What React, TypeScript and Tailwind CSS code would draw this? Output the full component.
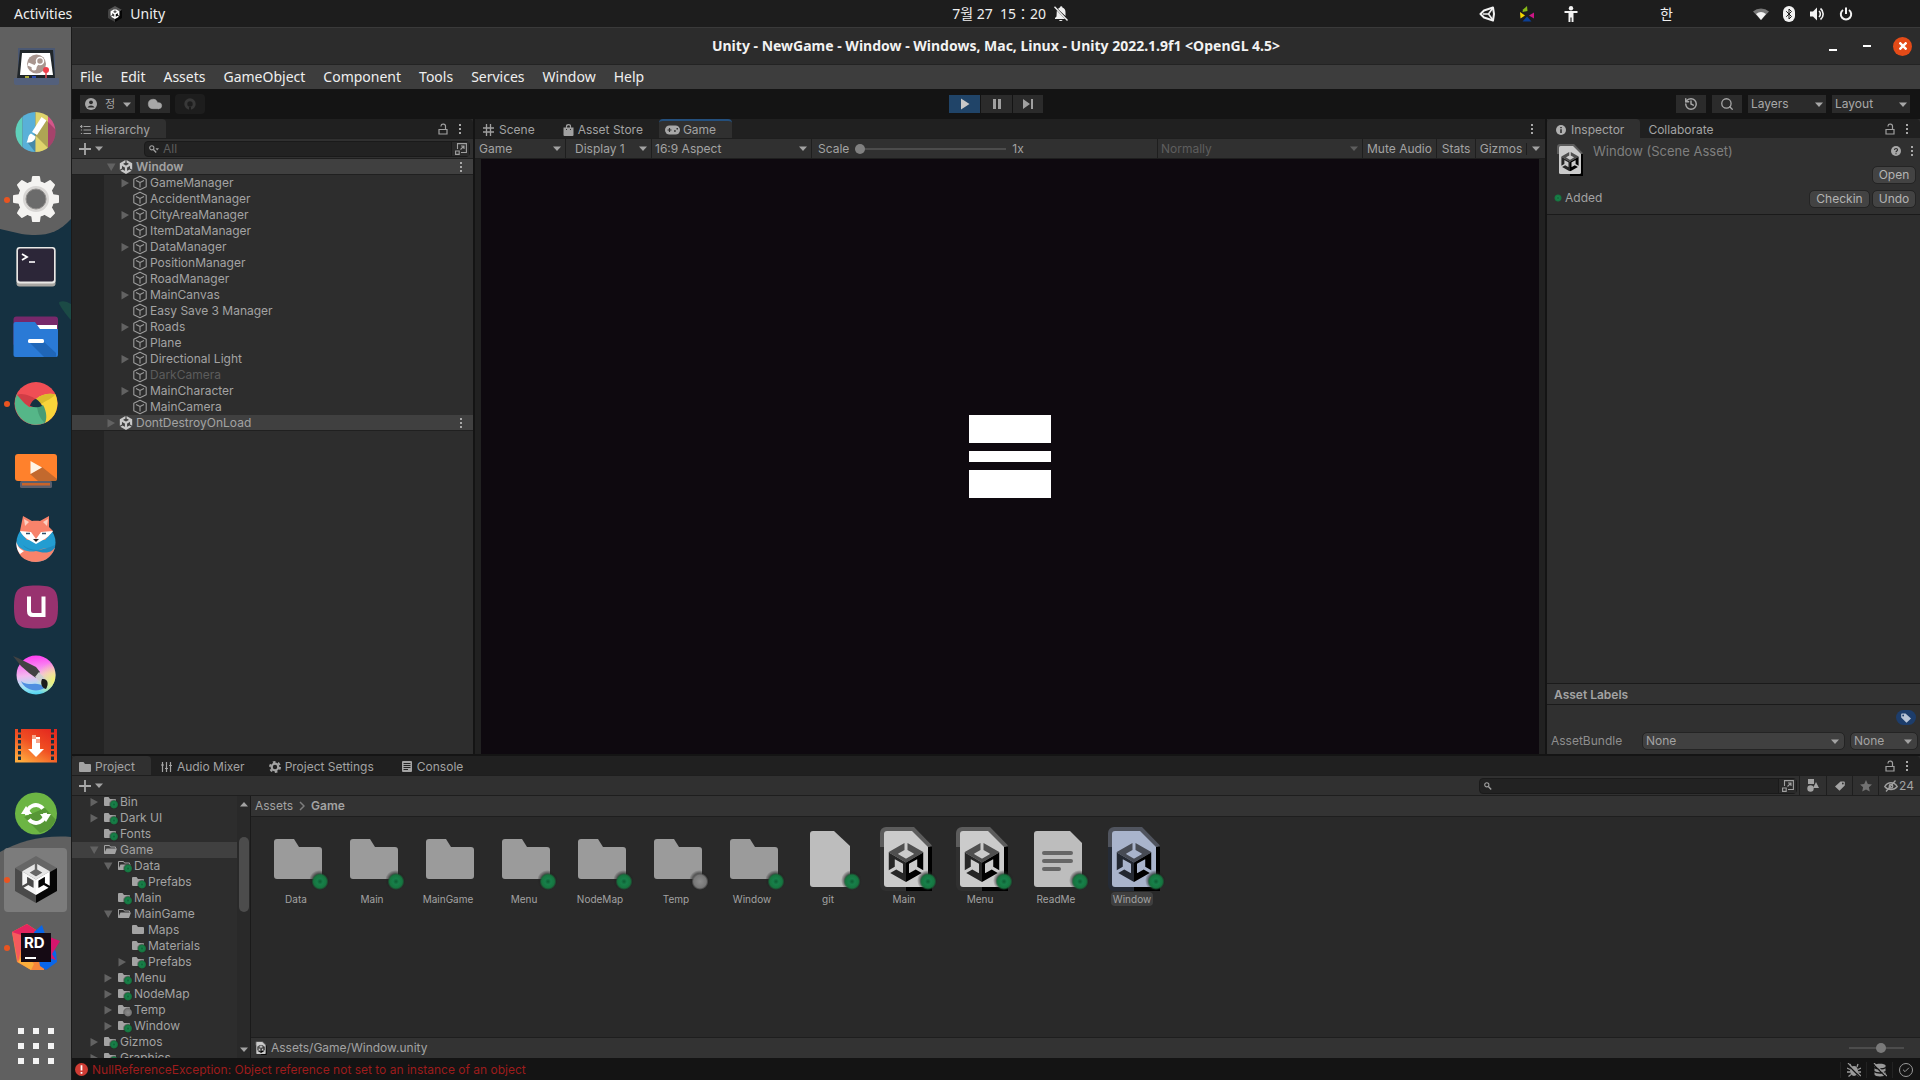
import type { ReactNode } from "react";
import clsx from "clsx";
import {
  Bluetooth,
  Check,
  Cloud,
  History,
  Search,
} from "lucide-react";

/* ---------- data ---------- */

const MENUS = ["File", "Edit", "Assets", "GameObject", "Component", "Tools", "Services", "Window", "Help"];

interface HierarchyItem {
  name: string;
  children?: boolean;
  disabled?: boolean;
}

const HIERARCHY: HierarchyItem[] = [
  { name: "GameManager", children: true },
  { name: "AccidentManager" },
  { name: "CityAreaManager", children: true },
  { name: "ItemDataManager" },
  { name: "DataManager", children: true },
  { name: "PositionManager" },
  { name: "RoadManager" },
  { name: "MainCanvas", children: true },
  { name: "Easy Save 3 Manager" },
  { name: "Roads", children: true },
  { name: "Plane" },
  { name: "Directional Light", children: true },
  { name: "DarkCamera", disabled: true },
  { name: "MainCharacter", children: true },
  { name: "MainCamera" },
];

type Badge = "added" | "ignored";

interface FolderItem {
  name: string;
  depth: 0 | 1 | 2;
  arrow?: "open" | "closed";
  open?: boolean;
  badge?: Badge;
  selected?: boolean;
}

const FOLDERS: FolderItem[] = [
  { name: "Bin", depth: 0, arrow: "closed", badge: "added" },
  { name: "Dark UI", depth: 0, arrow: "closed", badge: "added" },
  { name: "Fonts", depth: 0, badge: "added" },
  { name: "Game", depth: 0, arrow: "open", open: true, selected: true },
  { name: "Data", depth: 1, arrow: "open", open: true, badge: "added" },
  { name: "Prefabs", depth: 2, badge: "added" },
  { name: "Main", depth: 1, badge: "added" },
  { name: "MainGame", depth: 1, arrow: "open", open: true },
  { name: "Maps", depth: 2 },
  { name: "Materials", depth: 2, badge: "added" },
  { name: "Prefabs", depth: 2, arrow: "closed", badge: "added" },
  { name: "Menu", depth: 1, arrow: "closed", badge: "added" },
  { name: "NodeMap", depth: 1, arrow: "closed", badge: "added" },
  { name: "Temp", depth: 1, arrow: "closed", badge: "ignored" },
  { name: "Window", depth: 1, arrow: "closed", badge: "added" },
  { name: "Gizmos", depth: 0, arrow: "closed", badge: "added" },
  { name: "Graphics", depth: 0, arrow: "closed", badge: "added" },
];

const INDENT = { 0: "pl-[17px]", 1: "pl-[31px]", 2: "pl-[45px]" };

interface Asset {
  name: string;
  kind: "folder" | "file" | "scene" | "text";
  badge?: Badge;
  selected?: boolean;
}

const ASSETS: Asset[] = [
  { name: "Data", kind: "folder", badge: "added" },
  { name: "Main", kind: "folder", badge: "added" },
  { name: "MainGame", kind: "folder" },
  { name: "Menu", kind: "folder", badge: "added" },
  { name: "NodeMap", kind: "folder", badge: "added" },
  { name: "Temp", kind: "folder", badge: "ignored" },
  { name: "Window", kind: "folder", badge: "added" },
  { name: "git", kind: "file", badge: "added" },
  { name: "Main", kind: "scene", badge: "added" },
  { name: "Menu", kind: "scene", badge: "added" },
  { name: "ReadMe", kind: "text", badge: "added" },
  { name: "Window", kind: "scene", badge: "added", selected: true },
];

/* ---------- small glyphs ---------- */

const UNITY_PATH =
  "m12.9288 4.2939 3.7997 2.1929c.1366.077.1415.2905 0 .3675l-4.515 2.6076a.4192.4192 0 0 1-.4246 0L7.274 6.8543c-.139-.0745-.1415-.293 0-.3675l3.7972-2.193V0L1.3758 5.5977V16.793l3.7177-2.1456v-4.3858c-.0025-.1565.1813-.2682.318-.1838l4.5148 2.6076a.4252.4252 0 0 1 .2136.3676v5.2127c.0025.1565-.1813.2682-.3179.1838l-3.7996-2.1929-3.7178 2.1457L12 24l9.6954-5.5977-3.7178-2.1457-3.7996 2.1929c-.1341.082-.3229-.0248-.3179-.1838V13.053c0-.1565.087-.2956.2136-.3676l4.5149-2.6076c.134-.082.3228.0224.3179.1838v4.3858l3.7177 2.1456V5.5977L12.9288 0Z";

const SharedDefs = () => (
  <svg className="absolute size-0" aria-hidden="true">
    <defs>
      <clipPath id="unity-mark">
        <path d={UNITY_PATH} />
      </clipPath>
      <radialGradient id="badge-added">
        <stop offset="0" stopColor="#0e5c33" />
        <stop offset="0.35" stopColor="#17804a" />
        <stop offset="0.75" stopColor="#16753f" />
        <stop offset="1" stopColor="#16753f" stopOpacity="0" />
      </radialGradient>
      <radialGradient id="badge-ignored">
        <stop offset="0" stopColor="#8c8c8c" />
        <stop offset="0.75" stopColor="#777" />
        <stop offset="1" stopColor="#777" stopOpacity="0" />
      </radialGradient>
      <radialGradient id="badge-shade">
        <stop offset="0.5" stopColor="#1f1f1f" stopOpacity="0.9" />
        <stop offset="1" stopColor="#1f1f1f" stopOpacity="0" />
      </radialGradient>
    </defs>
  </svg>
);

const UnityMark = ({ className }: { className?: string }) => (
  <svg viewBox="0 0 24 24" className={className} fill="currentColor" aria-hidden="true">
    <path d={UNITY_PATH} />
  </svg>
);

/* The three faces of the cube, each with its own shade. */
const ShadedMark = ({ top, left, right }: { top: string; left: string; right: string }) => (
  <g clipPath="url(#unity-mark)">
    <path d="M0 0H24V5L12 12 0 5Z" fill={top} />
    <path d="M0 5 12 12V24H0Z" fill={left} />
    <path d="M24 5 12 12V24H24Z" fill={right} />
  </g>
);

const CubeGlyph = () => (
  <svg viewBox="0 0 14 16" className="h-4 w-3.5 shrink-0" fill="none" stroke="#9c9c9c" strokeLinejoin="round" aria-hidden="true">
    <path d="M7 1.200 13.200 4.300V11.700L7 14.800.8 11.700V4.300ZM3 5.500 7 7.500 11 5.500M7 7.500V12.500" strokeWidth="1.100" />
  </svg>
);

const Caret = ({ className }: { className?: string }) => (
  <svg viewBox="0 0 8 5" className={clsx("h-[5px] w-2 shrink-0", className)} fill="currentColor" aria-hidden="true">
    <path d="M0 0.5H8L4 5Z" />
  </svg>
);

const Kebab = () => (
  <svg viewBox="0 0 4 12" className="h-3 w-1" fill="#a8a8a8" aria-hidden="true">
    <path d="M1 1h2v2H1ZM1 5h2v2H1ZM1 9h2v2H1Z" />
  </svg>
);

const LockOpen = () => (
  <svg viewBox="0 0 10 12" className="h-3 w-2.5" fill="none" stroke="#a0a0a0" aria-hidden="true">
    <path d="M1 6.500H9V11H1Z" strokeWidth="1.200" />
    <path d="M3 3.500V3a2 2 0 0 1 2-1.800h.6A1.800 1.800 0 0 1 7.500 3V6.500" strokeWidth="1.200" />
  </svg>
);

const Plus = () => (
  <svg viewBox="0 0 12 12" className="size-3" stroke="#a8a8a8" strokeWidth="1.800" aria-hidden="true">
    <path d="M6 0V12M0 6H12" />
  </svg>
);

const PickerIcon = () => (
  <svg viewBox="0 0 12 12" className="size-3" fill="none" stroke="#a0a0a0" aria-hidden="true">
    <path d="M2.500 6V.6H11.400V9.500H6M.6 8H4.200V11.400H.6ZM5.500 6.500 9 3M6 3H9V6" strokeWidth="1.100" />
  </svg>
);

const SearchGlyph = ({ drop }: { drop?: boolean }) => (
  <svg viewBox="0 0 10 8" className="h-2 w-2.5 shrink-0" fill="none" stroke="#a0a0a0" aria-hidden="true">
    <circle cx="2.800" cy="2.800" r="2.100" strokeWidth="1.100" />
    <path d="M4.400 4.400 7.200 7.400" strokeWidth="1.400" />
    {drop && <path d="M6.500 3.200H10L8.200 5.400Z" fill="#a0a0a0" stroke="none" />}
  </svg>
);

const TreeArrow = ({ state }: { state?: "open" | "closed" }) => (
  <svg viewBox="0 0 10 10" className="size-2.5 shrink-0" fill="#626262" aria-hidden="true">
    {state === "open" && <path d="M1 1.500H9.500L5.200 9Z" />}
    {state === "closed" && <path d="M1.500 1 9 5 1.500 9.500Z" />}
  </svg>
);

const FolderGlyph = ({ open, badge }: { open?: boolean; badge?: Badge }) => (
  <svg viewBox="0 0 16 14" className="h-3.5 w-4 shrink-0" aria-hidden="true">
    {open ? (
      <>
        <path d="M1.500 10.500V2.500H6.500L7.500 4H12.500V5.500" fill="none" stroke="#a3a3a3" />
        <path d="M1 11 3.500 5.500H14L12 11Z" fill="#a3a3a3" />
      </>
    ) : (
      <path d="M1 3a1 1 0 0 1 1-1H5.500L7 4H12a1 1 0 0 1 1 1V10a1 1 0 0 1-1 1H2a1 1 0 0 1-1-1Z" fill="#a3a3a3" />
    )}
    {badge && (
      <>
        <circle cx="11" cy="9.500" r="5.500" fill="url(#badge-shade)" />
        <circle cx="11" cy="9.500" r="4.500" fill={badge === "added" ? "url(#badge-added)" : "url(#badge-ignored)"} />
      </>
    )}
  </svg>
);

const SceneDoc = ({ selected }: { selected?: boolean }) => (
  <>
    <path d="M6 20V6a6 6 0 0 1 6-6H40L58 18.500 55 20Z" fill={selected ? "#50545e" : "#5c5c5c"} />
    <path d="M6 20V58a6 6 0 0 0 6 6H32V20Z" fill={selected ? "#252b36" : "#303030"} />
    <path d="M32 20H58V64H32Z" fill="#000" />
    <path
      d="M10 7a3 3 0 0 1 3-3H38L54 20V57a3 3 0 0 1-3 3H13a3 3 0 0 1-3-3Z"
      fill={selected ? "#a9b4cc" : "#cbcbcb"}
    />
    <svg x="12" y="16" width="40" height="39" viewBox="0 0 24 24">
      <ShadedMark top={selected ? "#474b54" : "#4f4f4f"} left={selected ? "#232831" : "#262626"} right="#000" />
    </svg>
  </>
);

const AssetThumb = ({ kind, badge, selected }: Asset) => (
  <svg viewBox="0 0 64 64" className="size-16" aria-hidden="true">
    {kind === "folder" && (
      <path
        d="M8 15a3 3 0 0 1 3-3H28L33 20H53a3 3 0 0 1 3 3V49a3 3 0 0 1-3 3H11a3 3 0 0 1-3-3Z"
        fill="#9b9b9b"
      />
    )}
    {kind === "file" && <path d="M12 7a3 3 0 0 1 3-3H36L52 19V57a3 3 0 0 1-3 3H15a3 3 0 0 1-3-3Z" fill="#bdbdbd" />}
    {kind === "text" && (
      <>
        <path d="M8 7a3 3 0 0 1 3-3H44L56 16V57a3 3 0 0 1-3 3H11a3 3 0 0 1-3-3Z" fill="#bdbdbd" />
        <path d="M18 26H45M18 34H45M18 42H33" stroke="#666" strokeWidth="4" strokeLinecap="round" />
      </>
    )}
    {kind === "scene" && <SceneDoc selected={selected} />}
    {badge && (
      <>
        <circle cx="53.500" cy="53.500" r="10.500" fill="url(#badge-shade)" />
        <circle cx="54" cy="54.500" r="8.500" fill={badge === "added" ? "url(#badge-added)" : "url(#badge-ignored)"} />
      </>
    )}
  </svg>
);

/* ---------- desktop top bar ---------- */

const TopBar = () => (
  <header className="flex h-[27px] shrink-0 items-center bg-[#1d1d1d] font-['Noto_Sans','Noto_Sans_CJK_KR',sans-serif] text-sm text-[#efefef]">
    <div className="flex flex-[951] items-center">
      <button className="ml-3.5">Activities</button>
      <button className="ml-9 flex items-center gap-2">
        <svg viewBox="0 0 14 16" className="h-4 w-3.5" aria-hidden="true">
          <path d="M7 0 14 4 7 8 0 4Z" fill="#555" />
          <path d="M0 4 7 8V16L0 12Z" fill="#444" />
          <path d="M14 4 7 8V16L14 12Z" fill="#050505" />
          <svg x="2" y="3" width="10" height="10" viewBox="0 0 24 24">
            <path d={UNITY_PATH} fill="#fff" />
          </svg>
        </svg>
        Unity
      </button>
    </div>
    <button className="flex items-center gap-2 whitespace-pre">
      <span>7월 27  15：20</span>
      <svg viewBox="0 0 14 16" className="h-4 w-3.5" fill="#efefef" aria-hidden="true">
        <path d="M6 1.500a1.200 1.200 0 0 1 2.400 0C10.500 2.200 11.500 4 11.500 6V10L4 3C4.600 2.200 5.200 1.700 6 1.500ZM2.800 4.500 11 13H1V12L2.500 10.500ZM5 14H8.500C8.300 15.300 5.300 15.300 5 14Z" />
        <path d="M.5.8 13.500 14.500" stroke="#efefef" strokeWidth="1.400" />
      </svg>
    </button>
    <div className="flex flex-[851] items-center justify-end">
      <svg viewBox="0 0 16 16" className="size-4" fill="none" stroke="#f2f2f2" strokeWidth="2" aria-hidden="true">
        <path d="M1.500 8 5 4.500 14 1.500 15 8 14 14.500 5 11.500Z" strokeLinejoin="round" />
        <path d="M4 8H9.500L13.500 2.500M9.500 8 13.500 13.500" strokeWidth="1.600" />
      </svg>
      <svg viewBox="0 0 16 16" className="ml-6 size-4" aria-hidden="true">
        <path d="M4 3.500 8 0 8.500 5 3.500 6Z" fill="#86b817" />
        <path d="M1 6 6 9.500 1.500 12.500Z" fill="#f5d800" />
        <path d="M15 6.500 10 9.500 15 12.500Z" fill="#cc1685" />
        <path d="M8 10.500 12.500 15.500H3.500Z" fill="#0c3f94" />
      </svg>
      <svg viewBox="0 0 14 16" className="ml-[29px] h-4 w-3.5" fill="#f2f2f2" aria-hidden="true">
        <circle cx="7" cy="2.200" r="2.200" />
        <path d="M.5 5H13.500V7H9.500V16H7.600V11.500H6.400V16H4.500V7H.5Z" />
      </svg>
      <span className="ml-[82px]">한</span>
      <svg viewBox="0 0 16 12" className="ml-20 h-3 w-4" aria-hidden="true">
        <path d="M0 3.500A12 12 0 0 1 16 3.500L8 12Z" fill="#777" />
        <path d="M3 6A8 8 0 0 1 13 6L8 12Z" fill="#f2f2f2" />
      </svg>
      <span className="ml-[14px] flex h-4 w-3 items-center justify-center rounded-full bg-[#f2f2f2]">
        <Bluetooth className="size-3 text-[#1d1d1d]" />
      </span>
      <svg viewBox="0 0 16 16" className="ml-[14px] size-4" fill="#f2f2f2" aria-hidden="true">
        <path d="M1 5.500H4L8 1.500V14.500L4 10.500H1Z" />
        <path d="M10 5a4 4 0 0 1 0 6M11.500 2.500a7 7 0 0 1 0 11" fill="none" stroke="#f2f2f2" strokeWidth="1.600" />
      </svg>
      <svg viewBox="0 0 14 14" className="mr-[67px] ml-[14px] size-3.5" fill="none" stroke="#f2f2f2" strokeWidth="2" aria-hidden="true">
        <path d="M4 3A5.200 5.200 0 1 0 10 3M7 0.500V7" />
      </svg>
    </div>
  </header>
);

/* ---------- dock ---------- */

const DOCK_ICONS: { id: string; label: string; running?: boolean; active?: boolean; art: ReactNode }[] = [
  {
    id: "steam",
    label: "Steam",
    art: (
      <>
        <path d="M6 8H43V38H6Z" fill="#4b5872" />
        <path d="M8 10H41L43 38H5Z" fill="#20262a" />
        <path d="M10 13H38L41 35H8Z" fill="#fff" />
        <circle cx="24.500" cy="24" r="9.500" fill="#a9968f" />
        <path d="M16 24 23 27 27 21" stroke="#fff" strokeWidth="3" fill="none" />
        <circle cx="28" cy="21" r="3.500" fill="#a9968f" stroke="#fff" strokeWidth="1.500" />
        <circle cx="22" cy="28" r="2.500" fill="#fff" />
        <path d="M2 38H47V43a2 2 0 0 1-2 2H4a2 2 0 0 1-2-2Z" fill="#53607c" />
        <path d="M13 36H17V38H13Z" fill="#a9a837" />
        <path d="M20 36H24V38H20Z" fill="#2c4bb0" />
        <path d="M34 30V38" stroke="#e24b55" strokeWidth="1.500" />
        <circle cx="34" cy="30" r="3" fill="#ef3e4a" />
      </>
    ),
  },
  {
    id: "paint",
    label: "Paint",
    art: (
      <>
        <clipPath id="paint-disc">
          <circle cx="23.500" cy="24" r="20" />
        </clipPath>
        <g clipPath="url(#paint-disc)">
          <path d="M0 0H10.500V48H0Z" fill="#5fd0ba" />
          <path d="M10.500 0H23.500V48H10.500Z" fill="#59b0d8" />
          <path d="M23.500 0H36V48H23.500Z" fill="#dfd46c" />
          <path d="M36 0H48V48H36Z" fill="#d4568a" />
          <path d="M34 12 48 26V38L40 44 22 26Z" fill="#000" opacity="0.22" />
          <path d="M16 35 23 28V44Z" fill="#000" opacity="0.22" />
        </g>
        <path d="M29.500 9 34.500 12.500 25 27 20 24Z" fill="#fff" />
        <path d="M19 25.500 23.500 28.500C23 34 18 35 14.500 34.500 16.500 32 15.500 27 19 25.500Z" fill="#fff" />
      </>
    ),
  },
  {
    id: "settings",
    label: "Settings",
    running: true,
    art: (
      <>
        <g fill="#f4f3f1" stroke="#f4f3f1" strokeWidth="2" strokeLinejoin="round">
          <circle cx="24" cy="23" r="17" />
          <path d="M21 1H27L28 8H20ZM21 45H27L28 38H20ZM2 20V26L9 27V19ZM46 20V26L39 27V19Z" />
          <path d="M6 9 10 5 17 9 10 16ZM42 9 38 5 31 9 38 16ZM6 37 10 41 17 37 10 30ZM42 37 38 41 31 37 38 30Z" />
        </g>
        <circle cx="24" cy="23" r="13" fill="#d8d6d4" />
        <circle cx="24" cy="23" r="10" fill="#6b6b6b" stroke="#908e8c" />
      </>
    ),
  },
  {
    id: "terminal",
    label: "Terminal",
    art: (
      <>
        <rect x="4.500" y="4" width="39" height="38.500" rx="3" fill="#a8a6a2" />
        <rect x="4.500" y="3" width="39" height="36.500" rx="3" fill="#e9e8e6" />
        <rect x="6" y="4.500" width="36" height="33" rx="2" fill="#2c2638" />
        <path d="M10 10 15 13 10 16" fill="none" stroke="#fff" strokeWidth="1.800" />
        <path d="M17 18H23" stroke="#fff" strokeWidth="1.600" />
      </>
    ),
  },
  {
    id: "files",
    label: "Files",
    art: (
      <>
        <rect x="1.500" y="4.500" width="44.500" height="30" rx="3" fill="#77286a" />
        <path d="M22 13H45V20H22Z" fill="#fff" />
        <path d="M1.500 12a2 2 0 0 1 2-2H23L28 17H46V43a2 2 0 0 1-2 2H3.500a2 2 0 0 1-2-2Z" fill="#2a7ad6" />
        <path d="M18 31 31 29 44 41V45H32Z" fill="#1f66b8" />
        <rect x="16" y="27" width="16" height="4" rx="1.500" fill="#fff" />
      </>
    ),
  },
  {
    id: "chrome",
    label: "Chrome",
    running: true,
    art: (
      <>
        <circle cx="24" cy="23.500" r="21.500" fill="#f04e55" />
        <path d="M5 14A21.500 21.500 0 0 0 33 43L29 27 17 27Z" fill="#55b688" />
        <path d="M43.500 14.500A21.500 21.500 0 0 1 33 43C35 34 32 25 24 19 30 14 38 13 43.500 14.500Z" fill="#f9d43a" />
        <path d="M5 15C10 12 19 16 24 19L18 27C13 25 9 19 5 15Z" fill="#d13d46" />
        <path d="M43.500 14.500C38 20 31 22 29.500 24L24 19C30 14 38 13 43.500 14.500Z" fill="#dcbc2b" />
        <path d="M33 43C27 38 26 32 25 27L31 25C35 32 35 39 33 43Z" fill="#479c74" />
        <path d="M18 26C19 22 22 19 24 19 27 21 29 23 30 26 26 28 22 27.500 18 26Z" fill="#153141" />
      </>
    ),
  },
  {
    id: "video",
    label: "Video player",
    art: (
      <>
        <rect x="8" y="33" width="32" height="7" rx="1.500" fill="#5a5e6c" />
        <rect x="10" y="35" width="28" height="2.500" fill="#c8632a" />
        <rect x="3" y="6" width="42" height="27" rx="3" fill="#ff812c" />
        <path d="M18 26 30 19 45 31a2 2 0 0 1-2 2H26Z" fill="#c2692e" />
        <path d="M18.500 13V26L30 19.500Z" fill="#fff5e6" />
      </>
    ),
  },
  {
    id: "fox",
    label: "Postal fox",
    art: (
      <>
        <circle cx="24" cy="26.500" r="19.500" fill="#239dd1" />
        <path d="M11 0 20 5C22 4.500 26 4.500 28 5L37 0 37 11 41 15 33 24H15L8 15Z" fill="#f8836b" />
        <path d="M12 3 17 6 13 10ZM36 3 31 6 35 10Z" fill="#fbd0c2" />
        <path d="M8 15 19 16 24 23 29 16 41 15C38 19 35 22 31 24L24 28 17 24C13 22 10 19 8 15Z" fill="#fff" />
        <path d="M14 17.500H18M30 17.500H34" stroke="#30506a" strokeWidth="1.300" />
        <path d="M21 23H27L24 26Z" fill="#222" />
        <path d="M4.500 27C8 36 22 37 27 34 34 31 39 34 43 32 39 43 30 46 24 46 12 46 4 38 4.500 27Z" fill="#f8836b" />
        <path d="M4.500 25C5 31 9 34 12 35L8 38C5 34 4 30 4.500 25Z" fill="#fff" />
        <path d="M11 29C20 36 30 35 43 29C43 35 36 38 28 36 20 34 14 34 11 29Z" fill="#1f8cc0" />
      </>
    ),
  },
  {
    id: "uget",
    label: "U",
    art: (
      <>
        <path d="M24 1.500C42 1.500 46 5 46 23 46 41 42 44.500 24 44.500 6 44.500 2 41 2 23 2 5 6 1.500 24 1.500Z" fill="#98326f" />
        <path d="M17 12.500V27Q17 31 21 31H33M31.500 12.500V33" fill="none" stroke="#fff" strokeWidth="4" />
      </>
    ),
  },
  {
    id: "krita",
    label: "Krita",
    art: (
      <>
        <linearGradient id="krita-disc" x1="0.400" y1="0" x2="0.500" y2="1">
          <stop offset="0" stopColor="#ff3df2" />
          <stop offset="0.500" stopColor="#f3b9ee" />
          <stop offset="0.800" stopColor="#9fe6f5" />
          <stop offset="1" stopColor="#4fd3f0" />
        </linearGradient>
        <radialGradient id="krita-glow" cx="1" cy="0.650" r="0.500">
          <stop offset="0" stopColor="#f8f46a" />
          <stop offset="1" stopColor="#f8f46a" stopOpacity="0" />
        </radialGradient>
        <circle cx="24" cy="23" r="19.500" fill="url(#krita-disc)" />
        <circle cx="24" cy="23" r="19.500" fill="url(#krita-glow)" />
        <path d="M9 29C16 36 25 27 33 36 24 41 13 38 9 29Z" fill="#4f8fe0" />
        <path d="M1 4 6 6 24 15 28 20 24 26 17 21 9 14Z" fill="#424242" />
        <path d="M27 20 33 27 29 30 23 25Z" fill="#cfcfcf" />
        <path d="M30 27C36 26 37 32 34 37 30 36 28 32 30 27Z" fill="#1c1c1c" />
      </>
    ),
  },
  {
    id: "film",
    label: "Video downloader",
    art: (
      <>
        <linearGradient id="film-bg" x1="0.900" y1="0" x2="0.200" y2="1">
          <stop offset="0" stopColor="#e3261f" />
          <stop offset="0.500" stopColor="#f04e22" />
          <stop offset="1" stopColor="#ffab3e" />
        </linearGradient>
        <path d="M3 9H45V42.500H3Z" fill="url(#film-bg)" />
        <path d="M7.500 9V42M40.500 9V42" stroke="#153141" strokeWidth="3" strokeDasharray="3.500 2" />
        <path d="M20 17H28V29H32L24 37 16 29H20Z" fill="#fff" />
        <path d="M20 15H24V19H20ZM24 19H28V23H24Z" fill="#f6a58c" />
      </>
    ),
  },
  {
    id: "update",
    label: "Software updater",
    art: (
      <>
        <circle cx="24" cy="25.500" r="21" fill="#6cb544" />
        <path d="M12 29 28 45 38 41 44 32 33 20Z" fill="#579736" />
        <path d="M15 27A9 9 0 0 1 31 20.500M33 25A9 9 0 0 1 17 31.500" fill="none" stroke="#fff" strokeWidth="4" />
        <path d="M9 26 14 18 20 26ZM39 26 34 34 28 26Z" fill="#fff" />
      </>
    ),
  },
  {
    id: "unity",
    label: "Unity",
    running: true,
    active: true,
    art: (
      <>
        <path d="M24 0 45 12 24 24 3 12Z" fill="#666" />
        <path d="M3 12 24 24V47L3 35Z" fill="#4a4a4a" />
        <path d="M45 12 24 24V47L45 35Z" fill="#060606" />
        <svg x="8" y="8" width="32" height="31" viewBox="0 0 24 24">
          <ShadedMark top="#e6e6e6" left="#f5f5f5" right="#fff" />
        </svg>
      </>
    ),
  },
  {
    id: "rider",
    label: "Rider",
    running: true,
    art: (
      <>
        <path d="M0 8 15 0 24 6 34 20 32 46 19 46 5 38Z" fill="#f7863b" />
        <path d="M0 8 15 0 24 6 20 24 6 26Z" fill="#e4245f" />
        <path d="M0 8 12 12 6 38Z" fill="#f65a5d" />
        <path d="M22 8 30 1 33 10 44 28 45 38 34 46 28 42Z" fill="#0a66e8" />
        <path d="M30 10 48 17 40 30 44 36 30 32Z" fill="#d6166d" />
        <path d="M6 38 12 28 22 40 19 46Z" fill="#fbae3c" />
        <rect x="9" y="9" width="30" height="29" fill="#150a14" />
        <text x="12" y="24" fill="#fff" fontSize="15" fontWeight="700" fontFamily="Inter, sans-serif">
          RD
        </text>
        <path d="M13 34H24" stroke="#fff" strokeWidth="2" />
      </>
    ),
  },
];

const Dock = () => (
  <nav className="relative flex w-[72px] shrink-0 flex-col overflow-hidden border-r border-[#1a1a1a] bg-[#153141]" aria-label="Dock">
    {/* wallpaper showing through the dock */}
    <svg viewBox="0 0 72 1053" preserveAspectRatio="none" className="absolute inset-0 size-full" aria-hidden="true">
      <path d="M0 0H72V192C58 207 44 210 22 207L0 202Z" fill="#606060" />
      <path d="M0 1053V825C20 814 44 808 72 810V1053Z" fill="#606060" />
      <path d="M60 275Q66 273 72 277V293Q66 287 60 277Z" fill="#1b4a45" />
    </svg>
    <ul className="relative flex flex-col pt-[3px]">
      {DOCK_ICONS.map((icon) => (
        <li key={icon.id} className="h-[68px]">
          <button aria-label={icon.label} className="relative flex size-full items-center justify-center">
            {icon.active && <span className="absolute inset-x-1 inset-y-0.5 rounded bg-[#7c7c7c]" />}
            {icon.running && <span className="absolute left-1 size-1.5 rounded-full bg-[#e95420]" />}
            <svg viewBox="0 0 48 48" className="relative size-12" aria-hidden="true">
              {icon.art}
            </svg>
          </button>
        </li>
      ))}
    </ul>
    <button aria-label="Show applications" className="relative mx-auto mt-auto mb-4 grid grid-cols-3 gap-[9px]">
      {Array.from({ length: 9 }, (_, i) => (
        <span key={i} className="size-1.5 bg-[#f4f4f4]" />
      ))}
    </button>
  </nav>
);

/* ---------- editor chrome ---------- */

const TitleBar = () => (
  <div className="grid h-[37px] shrink-0 grid-cols-[1fr_auto_1fr] items-center border-t border-[#3a3a3a] bg-[#2c2c2c] font-['Noto_Sans',sans-serif]">
    <h1 className="col-start-2 text-sm font-bold text-[#f2f2f2]">
      Unity - NewGame - Window - Windows, Mac, Linux - Unity 2022.1.9f1 &lt;OpenGL 4.5&gt;
    </h1>
    <div className="flex items-center justify-end gap-[26px] pr-2">
      <button aria-label="Minimize" className="flex h-4 w-2 items-end pb-[3px]">
        <span className="h-0.5 w-2 bg-white" />
      </button>
      <button aria-label="Maximize" className="flex h-4 w-2 items-center">
        <span className="h-0.5 w-2 bg-white" />
      </button>
      <button aria-label="Close" className="-ml-1 flex size-[19px] items-center justify-center rounded-full bg-[#e44b18]">
        <svg viewBox="0 0 8 8" className="size-2" stroke="#fff" strokeWidth="2.400" aria-hidden="true">
          <path d="M.5.5 7.500 7.500M7.500.5.5 7.500" />
        </svg>
      </button>
    </div>
  </div>
);

const MenuBar = () => (
  <nav className="flex h-[25px] shrink-0 items-center gap-[18px] border-t border-[#232323] bg-[#3d3d3d] pl-2 font-['Noto_Sans',sans-serif] text-sm text-[#efefef]">
    {MENUS.map((menu) => (
      <button key={menu}>{menu}</button>
    ))}
  </nav>
);

const TOOL_BUTTON = "flex h-[18px] w-[30px] items-center justify-center bg-[#2b2b2b]";

const Toolbar = () => (
  <div className="grid h-[30px] shrink-0 grid-cols-[1fr_auto_1fr] items-center bg-[#141414] px-2 text-[#a8a8a8]">
    <div className="flex items-center gap-[5px]">
      <button className="flex h-[18px] items-center gap-2 bg-[#2b2b2b] px-1">
        <svg viewBox="0 0 12 12" className="ml-px size-3" aria-hidden="true">
          <circle cx="6" cy="6" r="6" fill="#a8a8a8" />
          <circle cx="6" cy="4.300" r="1.900" fill="#2b2b2b" />
          <path d="M2.500 9.500C3.500 6.800 8.500 6.800 9.500 9.500Z" fill="#2b2b2b" />
        </svg>
        <span className="text-[11px] leading-none">정</span>
        <Caret />
      </button>
      <button aria-label="Services" className={TOOL_BUTTON}>
        <Cloud className="size-4 fill-current" strokeWidth={1} />
      </button>
      <button aria-label="Collab" className="flex h-5 w-[30px] items-center justify-center rounded-sm bg-[#1d1d1d]">
        <svg viewBox="0 0 12 12" className="size-3" aria-hidden="true">
          <circle cx="6" cy="6" r="4.200" fill="none" stroke="#383838" strokeWidth="3" />
          <path d="M6 12V9" stroke="#1d1d1d" strokeWidth="2" />
        </svg>
      </button>
    </div>
    <div className="flex gap-px">
      <button aria-label="Play" className="flex h-[18px] w-[31px] items-center justify-center bg-[#204468]">
        <svg viewBox="0 0 10 12" className="h-3 w-2.5" fill="#c8c8c8">
          <path d="M1 .5 9.500 6 1 11.500Z" />
        </svg>
      </button>
      <button aria-label="Pause" className="flex h-[18px] w-[31px] items-center justify-center bg-[#2b2b2b]">
        <svg viewBox="0 0 8 10" className="h-2.5 w-2" fill="#a0a0a0">
          <path d="M0 0H3V10H0ZM5 0H8V10H5Z" />
        </svg>
      </button>
      <button aria-label="Step" className={TOOL_BUTTON}>
        <svg viewBox="0 0 10 10" className="size-2.5" fill="#a0a0a0">
          <path d="M0 0 7 5 0 10ZM8 0H10V10H8Z" />
        </svg>
      </button>
    </div>
    <div className="flex items-center justify-end gap-1.5 pr-0.5">
      <button aria-label="Undo history" className={TOOL_BUTTON}>
        <History className="size-3.5" strokeWidth={2.5} />
      </button>
      <button aria-label="Search" className={TOOL_BUTTON}>
        <Search className="size-3.5" strokeWidth={2.2} />
      </button>
      <Select label="Layers" value="Layers" className="h-[18px] w-[78px] bg-[#2b2b2b]" inset="pl-[3px]" />
      <Select label="Layout" value="Layout" className="h-[18px] w-[78px] bg-[#2b2b2b]" inset="pl-[3px]" />
    </div>
  </div>
);

interface SelectProps {
  label: string;
  value: string;
  className?: string;
  inset?: string;
  caret?: string;
  id?: string;
}

const Select = ({ label, value, className, inset = "pl-1", caret = "right-[3px]", id }: SelectProps) => (
  <span className={clsx("relative flex items-center", className)}>
    <select id={id} aria-label={label} defaultValue={value} className={clsx("size-full appearance-none bg-transparent outline-none", inset)}>
      <option>{value}</option>
    </select>
    <Caret className={clsx("pointer-events-none absolute", caret)} />
  </span>
);

interface TabProps {
  icon?: ReactNode;
  label: string;
  active?: boolean;
  focused?: boolean;
  className?: string;
}

const Tab = ({ icon, label, active, focused, className }: TabProps) => (
  <button
    role="tab"
    aria-selected={!!active}
    className={clsx(
      "flex h-[19px] items-center gap-1 border-t-2",
      active ? "rounded-t-sm bg-[#303030]" : "bg-transparent",
      focused ? "border-[#244f7c]" : "border-transparent",
      className,
    )}
  >
    {icon}
    {label}
  </button>
);

const TabStrip = ({ children, lock }: { children: ReactNode; lock?: boolean }) => (
  <div role="tablist" className="flex h-[19px] shrink-0 items-center rounded-t-sm bg-[#202020]">
    {children}
    <div className="ml-auto flex items-center gap-2.5 pr-[11px]">
      {lock && (
        <button aria-label="Lock">
          <LockOpen />
        </button>
      )}
      <button aria-label="Panel menu">
        <Kebab />
      </button>
    </div>
  </div>
);

const SearchBox = ({ label, placeholder, className }: { label: string; placeholder?: string; className?: string }) => (
  <div className={clsx("flex h-4 items-center rounded border border-[#1a1a1a] bg-[#222] pl-1", className)}>
    <SearchGlyph drop={!!placeholder} />
    <input
      aria-label={label}
      placeholder={placeholder}
      className="ml-1 min-w-0 flex-1 bg-transparent outline-none placeholder:text-[#5e5e5e]"
    />
    <button aria-label="Open search window" className="flex h-full w-[18px] items-center justify-center border-l border-[#1a1a1a] bg-[#2a2a2a]">
      <PickerIcon />
    </button>
  </div>
);

/* ---------- hierarchy ---------- */

const SceneHeader = ({ name, open, bold }: { name: string; open?: boolean; bold?: boolean }) => (
  <div className="flex h-4 items-center border-b border-[#202020] bg-[#404040] pr-2.5 pl-[34px]">
    <TreeArrow state={open ? "open" : "closed"} />
    <UnityMark className="mx-[3px] size-3.5 shrink-0 text-[#c8c8c8]" />
    <span className={clsx(bold && "font-semibold")}>{name}</span>
    <button aria-label={`${name} menu`} className="ml-auto">
      <Kebab />
    </button>
  </div>
);

const HierarchyPanel = () => (
  <section className="flex min-w-0 flex-[401] flex-col overflow-hidden bg-[#2d2d2d]">
    <TabStrip lock>
      <Tab
        active
        label="Hierarchy"
        className="pr-4 pl-2"
        icon={
          <svg viewBox="0 0 11 10" className="h-2.5 w-[11px]" stroke="#a0a0a0" strokeWidth="1.200" aria-hidden="true">
            <path d="M0 1.500H2.500M3.500 1.500H10.500M3.500 5H11M3.500 8.500H11M1.500 0V3M1.500 4.500V5.500M1.500 8V9" />
          </svg>
        }
      />
    </TabStrip>
    <div className="flex h-[21px] shrink-0 items-center border-y border-[#1e1e1e] bg-[#303030] pr-[3px] pl-[7px]">
      <button aria-label="Create object" className="flex items-center gap-1">
        <Plus />
        <Caret />
      </button>
      <SearchBox label="Search hierarchy" placeholder="All" className="ml-[41px] flex-1" />
    </div>
    <div className="flex min-h-0 flex-1 flex-col">
      <SceneHeader name="Window" open bold />
      <ul className="flex flex-col bg-[#242424] pl-8">
        {HIERARCHY.map((item) => (
          <li key={item.name} className="flex h-4 items-center gap-[3px] bg-[#2d2d2d] pl-4">
            <TreeArrow state={item.children ? "closed" : undefined} />
            <CubeGlyph />
            <span className={clsx(item.disabled && "text-[#5c5c5c]")}>{item.name}</span>
          </li>
        ))}
      </ul>
      <SceneHeader name="DontDestroyOnLoad" />
      <div className="w-8 flex-1 bg-[#242424]" />
    </div>
  </section>
);

/* ---------- game view ---------- */

const Divider = () => <span className="h-full w-px shrink-0 bg-[#1e1e1e]" />;

const GamePanel = () => (
  <section className="flex min-w-0 flex-[1070] flex-col overflow-hidden bg-[#212121]">
    <TabStrip>
      <Tab
        label="Scene"
        className="pr-2 pl-2"
        icon={
          <svg viewBox="0 0 11 12" className="mr-px h-3 w-[11px]" stroke="#a0a0a0" strokeWidth="1.300" aria-hidden="true">
            <path d="M3.500 0V12M7.500 0V12M0 4H11M0 8H11" />
          </svg>
        }
      />
      <Tab
        label="Asset Store"
        className="mr-4 ml-5"
        icon={
          <svg viewBox="0 0 11 12" className="h-3 w-[11px]" fill="#a0a0a0" aria-hidden="true">
            <path d="M.5 3.500H10.500V11a1 1 0 0 1-1 1h-8a1 1 0 0 1-1-1Z" />
            <path d="M3.500 5V2.500a2 1.800 0 0 1 4 0V5" fill="none" stroke="#a0a0a0" strokeWidth="1.200" />
            <path d="M3 5.500H4M7 5.500H8" stroke="#303030" />
          </svg>
        }
      />
      <Tab
        active
        focused
        label="Game"
        className="pr-4 pl-1.5"
        icon={
          <svg viewBox="0 0 15 10" className="-mr-px h-2.5 w-[15px]" aria-hidden="true">
            <rect y="0.500" width="15" height="9" rx="4.500" fill="#a8a8a8" />
            <path d="M4.500 3V7M2.500 5H6.500" stroke="#303030" strokeWidth="1.200" />
            <path d="M9 6H10.800M11.500 3.800H13" stroke="#303030" strokeWidth="1.500" />
          </svg>
        }
      />
    </TabStrip>
    <div className="flex h-[21px] shrink-0 items-center border-y border-[#1e1e1e] bg-[#303030]">
      <Select label="View" value="Game" className="h-full w-[90px]" caret="right-1" />
      <Divider />
      <Select label="Display" value="Display 1" className="h-full w-[85px]" inset="pl-[9px]" caret="right-1" />
      <Divider />
      <Select label="Aspect ratio" value="16:9 Aspect" className="h-full w-[159px]" inset="pl-[3px]" caret="right-1" />
      <Divider />
      <label htmlFor="scale" className="ml-1.5">
        Scale
      </label>
      <input
        id="scale"
        type="range"
        min={1}
        max={5}
        defaultValue={1}
        className="mx-1.5 h-3 w-[151px] appearance-none bg-[linear-gradient(#4c4c4c,#4c4c4c)] bg-[length:100%_2px] bg-center bg-no-repeat [&::-webkit-slider-thumb]:size-2.5 [&::-webkit-slider-thumb]:appearance-none [&::-webkit-slider-thumb]:rounded-full [&::-webkit-slider-thumb]:bg-[#808080]"
      />
      <span>1x</span>
      <div className="ml-auto flex h-full items-center">
        <Divider />
        <Select label="Play mode" value="Normally" className="h-full w-[204px] text-[#5e5e5e]" inset="pl-[3px]" caret="right-1" />
        <Divider />
        <button className="h-full w-[73px]">Mute Audio</button>
        <Divider />
        <button className="h-full w-[38px]">Stats</button>
        <Divider />
        <button className="h-full w-[50px]">Gizmos</button>
        <span className="h-3 w-px bg-[#1e1e1e]" />
        <button aria-label="Gizmo settings" className="flex h-full w-[18px] items-center justify-center">
          <Caret />
        </button>
      </div>
    </div>
    <div className="mx-1.5 flex flex-1 flex-col items-center justify-center gap-2 bg-[#0e090f]">
      <div className="h-7 w-[82px] bg-white" />
      <div className="h-[11px] w-[82px] bg-white" />
      <div className="h-7 w-[82px] bg-white" />
    </div>
  </section>
);

/* ---------- inspector ---------- */

const PUSH_BUTTON =
  "flex h-4 items-center justify-center rounded-sm bg-[#434343] text-[#b4b4b4] outline outline-[#242424]";

const InspectorPanel = () => (
  <section className="flex min-w-0 flex-[373] flex-col overflow-hidden bg-[#2d2d2d]">
    <TabStrip lock>
      <Tab
        active
        label="Inspector"
        className="pr-4 pl-[9px]"
        icon={
          <svg viewBox="0 0 10 10" className="mr-px size-2.5" aria-hidden="true">
            <circle cx="5" cy="5" r="5" fill="#b0b0b0" />
            <path d="M5 2V3.300M5 4.300V8" stroke="#303030" strokeWidth="1.600" />
          </svg>
        }
      />
      <Tab label="Collaborate" className="pl-2" />
    </TabStrip>
    <div className="flex h-[77px] shrink-0 flex-col border-b border-[#1a1a1a] bg-[#303030] pr-[5px] pl-[9px]">
      <div className="flex h-[29px] items-start">
        <svg viewBox="4 0 56 64" className="mt-1.5 h-8 w-7 shrink-0" aria-hidden="true">
          <SceneDoc />
        </svg>
        <h2 className="mt-[3px] ml-[9px] flex-1 text-[13px] leading-5 text-[#7f7f7f]">Window (Scene Asset)</h2>
        <button aria-label="Help" className="mt-2 mr-[9px]">
          <svg viewBox="0 0 10 10" className="size-2.5" aria-hidden="true">
            <circle cx="5" cy="5" r="5" fill="#a8a8a8" />
            <path d="M3.500 4C3.500 2 6.700 2 6.500 4 6.400 4.900 5 5 5 6.200M5 7.200V8.200" fill="none" stroke="#303030" strokeWidth="1.200" />
          </svg>
        </button>
        <button aria-label="Asset menu" className="mt-[7px] mr-px">
          <Kebab />
        </button>
      </div>
      <button className={clsx(PUSH_BUTTON, "w-[42px] self-end")}>Open</button>
      <div className="mt-2 flex items-start gap-1">
        <div className="-mt-px -ml-0.5 flex flex-1 items-center gap-[3px] leading-4">
          <svg viewBox="0 0 8 8" className="size-2" aria-hidden="true">
            <circle cx="4" cy="4" r="4" fill="url(#badge-added)" />
          </svg>
          Added
        </div>
        <button className={clsx(PUSH_BUTTON, "w-[59px]")}>Checkin</button>
        <button className={clsx(PUSH_BUTTON, "w-[42px]")}>Undo</button>
      </div>
    </div>
    <div className="flex-1" />
    <div className="flex h-[21px] shrink-0 items-center border-t border-[#1a1a1a] bg-[#323232] pt-px pl-[7px] font-semibold">
      Asset Labels
    </div>
    <div className="flex h-[50px] shrink-0 flex-col border-t border-[#1a1a1a] bg-[#303030] pr-[3px] pl-1">
      <button aria-label="Edit labels" className="mt-[5px] mr-px flex h-[15px] w-5 items-center justify-center self-end rounded-full bg-[#1d3d6b]">
        <TagGlyph className="size-2.5 -scale-x-100 text-[#b8c4d6]" />
      </button>
      <div className="mt-2 flex items-center">
        <label htmlFor="bundle" className="w-[92px] text-[#8e8e8e]">
          AssetBundle
        </label>
        <Select
          id="bundle"
          label="AssetBundle"
          value="None"
          className="h-4 flex-1 rounded-sm bg-[#404040] outline outline-[#242424]"
          inset="pl-[3px]"
          caret="right-[5px]"
        />
        <Select
          label="AssetBundle variant"
          value="None"
          className="ml-[7px] h-4 w-[66px] rounded-sm bg-[#404040] outline outline-[#242424]"
          inset="pl-[3px]"
          caret="right-[5px]"
        />
      </div>
    </div>
  </section>
);

const TagGlyph = ({ className }: { className?: string }) => (
  <svg viewBox="0 0 10 10" className={className} fill="currentColor" aria-hidden="true">
    <path d="M5.500.5H9a.8.8 0 0 1 .8.8V4.600L4.500 9.700 0 5.500ZM7.800 1.600a.9.9 0 1 0 .1 1.800.9.9 0 0 0-.1-1.800Z" fillRule="evenodd" />
  </svg>
);

/* ---------- project ---------- */

const FolderTree = () => (
  <div className="flex w-[179px] shrink-0 border-r border-[#1a1a1a]">
    <ul className="flex min-w-0 flex-1 flex-col overflow-hidden bg-[#2d2d2d]">
      {FOLDERS.map((f, i) => (
        <li
          key={i}
          className={clsx(
            "flex h-4 shrink-0 items-center first:-mt-0.5",
            INDENT[f.depth],
            f.selected && "bg-[#404040]",
          )}
        >
          <TreeArrow state={f.arrow} />
          <span className="mr-px ml-1 flex">
            <FolderGlyph open={f.open} badge={f.badge} />
          </span>
          {f.name}
        </li>
      ))}
    </ul>
    <div className="flex w-[13px] shrink-0 flex-col items-center justify-between bg-[#292929] py-1.5">
      <Caret className="rotate-180" />
      <div className="mt-[30px] h-[75px] w-2.5 rounded-full bg-[#4c4c4c]" />
      <Caret className="mt-auto" />
    </div>
  </div>
);

const AssetGrid = () => (
  <div className="flex min-w-0 flex-1 flex-col bg-[#292929]">
    <nav className="flex h-[21px] shrink-0 items-center gap-1.5 border-b border-[#1e1e1e] bg-[#333] pl-1" aria-label="Path">
      <a href="#assets">Assets</a>
      <svg viewBox="0 0 6 10" className="h-2.5 w-1.5" fill="none" stroke="#7d7d7d" strokeWidth="1.500" aria-hidden="true">
        <path d="M1 1 5 5 1 9" />
      </svg>
      <a href="#game" className="font-semibold">
        Game
      </a>
    </nav>
    <ul className="flex flex-1 flex-wrap content-start px-[9px] pt-2.5">
      {ASSETS.map((a, i) => (
        <li key={i} className="flex w-[76px] flex-col items-center text-[10px] leading-[14px]">
          <AssetThumb {...a} />
          <span className={clsx("mt-px mr-1 rounded-sm px-0.5", a.selected && "bg-[#3f3f3f]")}>{a.name}</span>
        </li>
      ))}
    </ul>
    <div className="flex h-[21px] shrink-0 items-center gap-1 border-t border-[#1e1e1e] bg-[#333] pr-4 pl-1">
      <svg viewBox="4 0 56 64" className="h-3.5 w-3" aria-hidden="true">
        <SceneDoc />
      </svg>
      <span className="flex-1">Assets/Game/Window.unity</span>
      <input
        type="range"
        aria-label="Icon size"
        min={0}
        max={100}
        defaultValue={60}
        className="h-3 w-[55px] appearance-none bg-[linear-gradient(#4c4c4c,#4c4c4c)] bg-[length:100%_2px] bg-center bg-no-repeat [&::-webkit-slider-thumb]:size-2.5 [&::-webkit-slider-thumb]:appearance-none [&::-webkit-slider-thumb]:rounded-full [&::-webkit-slider-thumb]:bg-[#7a7a7a]"
      />
    </div>
  </div>
);

const ProjectPanel = () => (
  <section className="flex min-h-0 flex-[302] flex-col overflow-hidden bg-[#2d2d2d]">
    <TabStrip lock>
      <Tab
        active
        label="Project"
        className="pr-4 pl-[7px]"
        icon={
          <svg viewBox="0 0 12 10" className="h-2.5 w-3" fill="#a3a3a3" aria-hidden="true">
            <path d="M0 1a1 1 0 0 1 1-1H4.500L6 2H11a1 1 0 0 1 1 1V9a1 1 0 0 1-1 1H1a1 1 0 0 1-1-1Z" />
          </svg>
        }
      />
      <Tab
        label="Audio Mixer"
        className="ml-2.5"
        icon={
          <svg viewBox="0 0 11 10" className="mr-px h-2.5 w-[11px]" stroke="#a3a3a3" strokeWidth="1.200" aria-hidden="true">
            <path d="M1.500 0V10M5.500 0V10M9.500 0V10M0 3H3M4 6.500H7M8 3.500H11" />
          </svg>
        }
      />
      <Tab
        label="Project Settings"
        className="ml-6"
        icon={
          <svg viewBox="0 0 12 12" className="size-3" fill="none" stroke="#a3a3a3" aria-hidden="true">
            <circle cx="6" cy="6" r="3.300" strokeWidth="2.200" />
            <circle cx="6" cy="6" r="5" strokeWidth="2" strokeDasharray="2.600 2.600" />
          </svg>
        }
      />
      <Tab
        label="Console"
        className="ml-7"
        icon={
          <svg viewBox="0 0 10 11" className="mr-px h-[11px] w-2.5" aria-hidden="true">
            <rect width="10" height="11" rx="1" fill="#a3a3a3" />
            <path d="M1.500 2.500H8.500M1.500 4.500H8.500M1.500 6.500H8.500M1.500 8.500H6" stroke="#202020" />
          </svg>
        }
      />
    </TabStrip>
    <div className="flex h-[21px] shrink-0 items-center border-y border-[#1e1e1e] bg-[#303030] pl-[7px]">
      <button aria-label="Create asset" className="flex items-center gap-1">
        <Plus />
        <Caret />
      </button>
      <SearchBox label="Search project" className="mr-0.5 ml-auto w-[318px]" />
      <Divider />
      <button aria-label="Search by type" className="flex h-full w-[26px] items-center justify-center">
        <svg viewBox="0 0 12 13" className="h-[13px] w-3" fill="#a3a3a3" aria-hidden="true">
          <path d="M1 0H7V5H1ZM9 3 12 9H6Z" />
          <circle cx="3.500" cy="9.500" r="3.200" />
        </svg>
      </button>
      <Divider />
      <button aria-label="Search by label" className="flex h-full w-[25px] items-center justify-center">
        <TagGlyph className="size-2.5" />
      </button>
      <Divider />
      <button aria-label="Favorite" className="flex h-full w-[25px] items-center justify-center">
        <svg viewBox="0 0 12 12" className="size-3" fill="#727272" aria-hidden="true">
          <path d="M6 0 7.800 4 12 4.400 8.900 7.300 9.800 11.600 6 9.400 2.200 11.600 3.100 7.300 0 4.400 4.200 4Z" />
        </svg>
      </button>
      <Divider />
      <button className="flex h-full items-center pr-1.5 pl-[5px]" aria-label="Hidden packages: 24">
        <svg viewBox="0 0 14 12" className="h-3 w-3.5" fill="none" stroke="#a0a0a0" strokeWidth="1.300" aria-hidden="true">
          <path d="M.7 6.500C4 1.500 10 1.500 13.300 6.500 10 10.500 4 10.500.7 6.500ZM2 11.500 11.500.5" />
          <circle cx="7" cy="6.200" r="1.800" />
        </svg>
        <span className="ml-px">24</span>
      </button>
    </div>
    <div className="flex min-h-0 flex-1">
      <FolderTree />
      <AssetGrid />
    </div>
  </section>
);

const StatusBar = () => (
  <footer className="flex h-[22px] shrink-0 items-center bg-[#141414] pt-px pr-0.5 pl-[3px] text-[#9d1c1c]">
    <svg viewBox="0 0 12 12" className="mr-1 size-[13px]" aria-hidden="true">
      <circle cx="6" cy="6" r="6" fill="#cf3c34" />
      <path d="M6 2V7M6 8.200V10" stroke="#fff" strokeWidth="1.600" />
    </svg>
    <span className="flex-1">NullReferenceException: Object reference not set to an instance of an object</span>
    <button aria-label="Debugger" className="flex h-4 w-[26px] items-center justify-center border-l border-[#222]">
      <svg viewBox="0 0 14 14" className="size-3.5" aria-hidden="true">
        <ellipse cx="7" cy="8" rx="4" ry="5" fill="#9a9a9a" />
        <path d="M4 4 3 1M10 4 11 1M3 6.500 0 5M11 6.500 14 5M3 9H0M11 9H14M4 11.500 1.500 13.500M10 11.500 12.500 13.500" stroke="#9a9a9a" strokeWidth="1.300" />
        <path d="M0 1 13 14" stroke="#141414" strokeWidth="1.500" />
        <path d="M1 0 14 13" stroke="#9a9a9a" strokeWidth="1.200" />
      </svg>
    </button>
    <button aria-label="Cache server" className="flex h-4 w-[26px] items-center justify-center border-l border-[#222]">
      <svg viewBox="0 0 14 14" className="size-3.5" aria-hidden="true">
        <path d="M1.500 2.500C1.500 0 12.500 0 12.500 2.500V11.500C12.500 14 1.500 14 1.500 11.500Z" fill="#9a9a9a" />
        <path d="M1 4.500C4 6.500 10 6.500 13 4.500M1 8.500C4 10.500 10 10.500 13 8.500M0 1 13 14" fill="none" stroke="#141414" strokeWidth="1.300" />
        <path d="M1 0 14 13" stroke="#9a9a9a" strokeWidth="1.200" />
      </svg>
    </button>
    <button aria-label="Progress" className="flex h-4 w-[26px] items-center justify-center border-l border-[#222] text-[#9a9a9a]">
      <span className="flex size-3.5 items-center justify-center rounded-full border border-[#9a9a9a]">
        <Check className="size-2" strokeWidth={3} />
      </span>
    </button>
  </footer>
);

export default function App() {
  return (
    <div className="flex h-screen flex-col overflow-hidden bg-[#141414]">
      <SharedDefs />
      <TopBar />
      <div className="flex min-h-0 flex-1">
        <Dock />
        <main className="flex min-w-0 flex-1 flex-col font-['Inter','Noto_Sans_CJK_KR',sans-serif] text-xs text-[#a3a3a3]">
          <TitleBar />
          <MenuBar />
          <Toolbar />
          <div className="flex min-h-0 flex-1 flex-col gap-0.5">
            <div className="flex min-h-0 flex-[635] gap-0.5">
              <HierarchyPanel />
              <GamePanel />
              <InspectorPanel />
            </div>
            <ProjectPanel />
          </div>
          <StatusBar />
        </main>
      </div>
    </div>
  );
}
